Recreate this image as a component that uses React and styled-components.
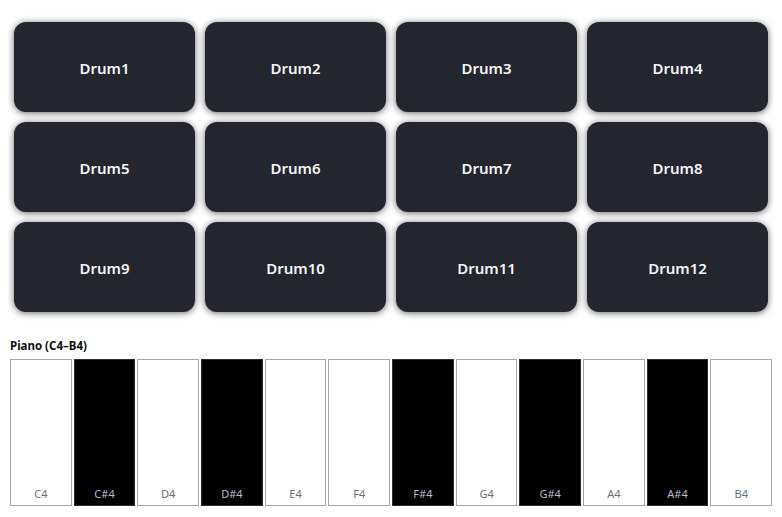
import React from 'react';
import styled, { createGlobalStyle } from 'styled-components';

const GlobalStyle = createGlobalStyle`
  body {
    margin: 8px;
    background: #ffffff;
    font-family: "Noto Sans", "Open Sans", sans-serif;
  }
`;

const PadGrid = styled.div`
  display: grid;
  grid-template-columns: repeat(4, 1fr);
  grid-auto-rows: 90px;
  gap: 10px;
  padding: 14px 6px 0;
`;

const Pad = styled.button`
  border: none;
  border-radius: 12px;
  background: #23252f;
  color: #f4f4f6;
  font-family: "Noto Sans", "Open Sans", sans-serif;
  font-size: 15px;
  font-weight: 600;
  padding: 2px 0 0;
  box-shadow: 0 1px 7px rgba(0, 0, 0, 0.6);
  cursor: pointer;
`;

const PianoSection = styled.section`
  margin-top: 26px;
  padding: 0 2px;
`;

const PianoTitle = styled.div`
  font-size: 11.5px;
  font-weight: 700;
  color: #111;
  margin: 0 0 6px 0;
  line-height: 15px;
`;

const Keyboard = styled.div`
  display: flex;
  gap: 2px;
  height: 147px;
`;

const Key = styled.div`
  flex: 1;
  box-sizing: border-box;
  display: flex;
  align-items: flex-end;
  justify-content: center;
  padding-bottom: 4px;
  font-size: 11px;
  background: ${p => (p.$black ? '#000000' : '#ffffff')};
  color: ${p => (p.$black ? '#b8bcc6' : '#6b6f78')};
  border: 1px solid ${p => (p.$black ? '#2a2d36' : '#a3a7b0')};
`;

const notes = ['C4', 'C#4', 'D4', 'D#4', 'E4', 'F4', 'F#4', 'G4', 'G#4', 'A4', 'A#4', 'B4'];

const App = () => {
  return (
    <>
      <GlobalStyle />
      <PadGrid>
        {Array.from({ length: 12 }, (_, i) => (
          <Pad key={i}>Drum{i + 1}</Pad>
        ))}
      </PadGrid>
      <PianoSection>
        <PianoTitle>Piano (C4–B4)</PianoTitle>
        <Keyboard>
          {notes.map(n => (
            <Key key={n} $black={n.includes('#')}>
              {n}
            </Key>
          ))}
        </Keyboard>
      </PianoSection>
    </>
  );
};

export default App;
